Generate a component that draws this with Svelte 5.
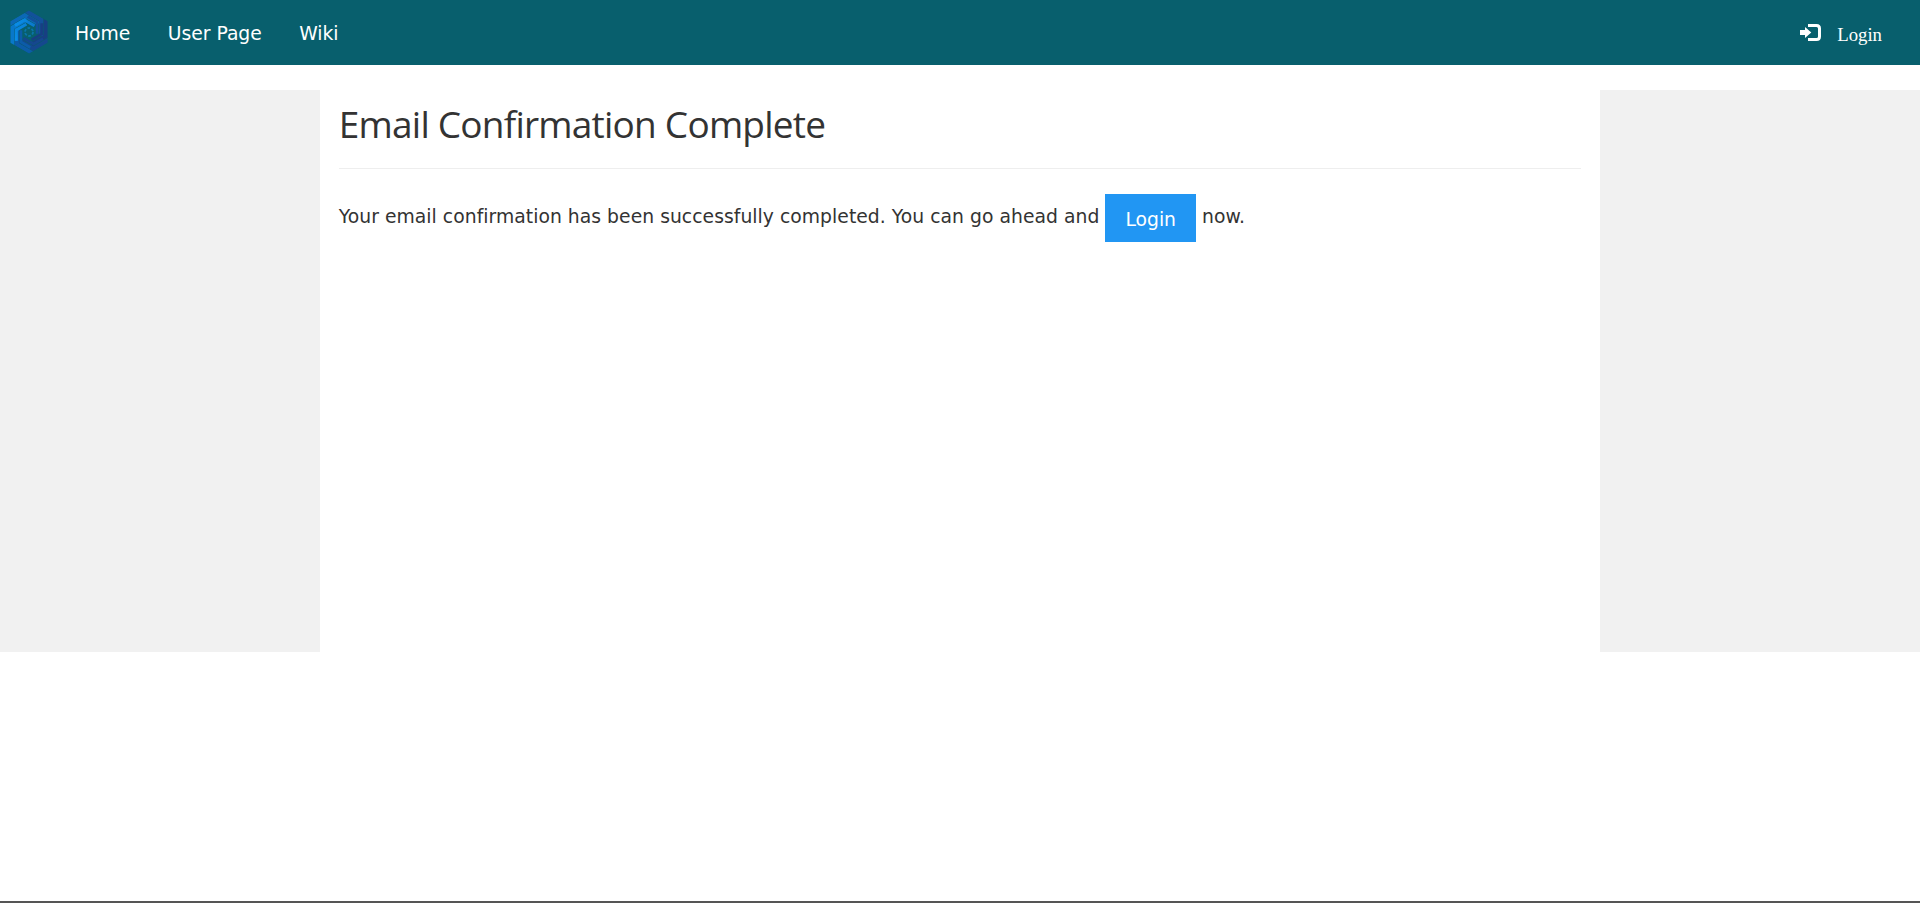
<script>
  const links = ['Home', 'User Page', 'Wiki'];
  const blades = [
    [0, '#0b68b6'],
    [60, '#12519a'],
    [120, '#173f82'],
    [180, '#15488e'],
    [240, '#0c5ca8'],
    [300, '#0878ca'],
  ];
</script>

<div class="page">
  <nav>
    <a class="brand" href="#home" aria-label="Home">
      <svg width="38" height="44" viewBox="-19 -22 38 44">
        <defs>
          <clipPath id="hex"><path d="M0-21.5 18.6-10.7V10.7L0 21.5-18.6 10.7V-10.7Z" /></clipPath>
          <linearGradient id="shine" gradientUnits="userSpaceOnUse" x1="-13" y1="0" x2="10" y2="-8">
            <stop offset="0" stop-color="#0a8ee8" />
            <stop offset="1" stop-color="#0a8ee8" stop-opacity="0.3" />
          </linearGradient>
        </defs>
        <g clip-path="url(#hex)">
          {#each blades as [angle, color]}
            <g class="blade" transform="rotate({angle})">
              <path stroke={color} stroke-width="4.2" d="M-20.5-7.5-4.6-16.7 9.5-8.5" />
              <path stroke={color} stroke-width="2.8" d="M-14-6.6-4.6-12 5.5-6.2" />
            </g>
          {/each}
          <path class="blade" stroke="url(#shine)" stroke-width="3" d="M-14-6.6-4.6-12 5.5-6.2" />
          <path class="blade" stroke="url(#shine)" stroke-width="3" transform="rotate(-60)" d="M-14-6.6-4.6-12 5.5-6.2" />
        </g>
        <circle class="ring" r="4" />
      </svg>
    </a>
    {#each links as link}
      <a class="item" href="#{link}">{link}</a>
    {/each}
    <a class="login" href="#login">
      <svg width="22" height="18" viewBox="0 0 22 18">
        <path fill="#fff" d="M0 6h5V3l6.3 5.5L5 14v-3H0Z" />
        <path fill="none" stroke="#fff" stroke-width="3" d="M8 1.5h8.5q3 0 3 3v8q0 3-3 3H8" />
      </svg>
      <span>Login</span>
    </a>
  </nav>
  <main>
    <aside></aside>
    <section>
      <h2>Email Confirmation Complete</h2>
      <hr />
      <p>Your email confirmation has been successfully completed. You can go ahead and <a class="button" href="#login">Login</a> now.</p>
    </section>
    <aside></aside>
  </main>
  <footer></footer>
</div>

<style>
  :global(body) { background: #fff; overflow: hidden; }
  .page {
    height: 903px;
    display: flex;
    flex-direction: column;
    font: 18.75px/1.5 "DejaVu Sans", sans-serif;
    color: #333;
    box-sizing: border-box;
  }
  a { text-decoration: none; color: #fff; }
  nav { height: 65px; flex: none; display: flex; background: #085f6d; }
  .brand { width: 56.25px; padding: 10px 0 0 9.5px; box-sizing: border-box; }
  svg { display: block; }
  .blade { fill: none; }
  .ring { fill: none; stroke: #0a74a8; stroke-width: 1.8; stroke-dasharray: 2.7 1.5; }
  .item { padding: 20px 18.6px 0 18.75px; }
  .login {
    margin-left: auto;
    padding: 21px 38px 0 0;
    display: flex;
    gap: 15.5px;
    font-family: "Liberation Serif", serif;
  }
  .login svg { margin-top: 3px; }
  main { height: 562px; margin-top: 25px; display: flex; flex: none; }
  aside { width: 320px; background: #f1f1f1; }
  section { flex: 1; padding: 0 18.75px; }
  h2 {
    margin: 10.5px 0 0;
    height: 67.5px;
    font: 400 37px/45px "Open Sans", sans-serif;
    letter-spacing: -0.77px;
  }
  hr { border: 0; height: 1px; background: #eee; margin: 0; }
  p { margin: 24px 0 0; letter-spacing: 0.04px; }
  .button {
    display: inline-block;
    padding: 12px 20px 8px;
    margin-top: 1px;
    position: relative;
    top: -0.5px;
    letter-spacing: 0;
    vertical-align: middle;
    background: #2196f3;
  }
  footer { margin-top: auto; height: 2px; background: #555; }
</style>
